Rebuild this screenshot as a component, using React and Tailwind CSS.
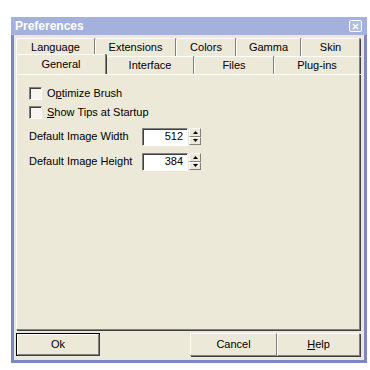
import React from "react";

const font = { fontFamily: '"Liberation Sans", Arial, sans-serif' };

function Tab({ w, children, selected }) {
  return (
    <div
      className={
        "flex items-center justify-center border-l border-t border-white border-r border-r-[#808080] shadow-[1px_0_0_#404040] rounded-t-[2px] " +
        (selected ? "h-[20px] -mt-[2px] bg-[#ece9d8] relative z-10" : "h-[18px]")
      }
      style={{ width: w }}
    >
      {children}
    </div>
  );
}

function Check({ children }) {
  return (
    <div className="flex items-center gap-[5px] h-[19px]">
      <div className="w-[13px] h-[13px] bg-[#f6f4ee] border-t border-l border-[#808080] border-b border-r border-b-white border-r-white shadow-[inset_1px_1px_0_#404040]" />
      <span>{children}</span>
    </div>
  );
}

function Spin({ label, value }) {
  return (
    <div className="flex items-center h-[25px]">
      <span className="w-[113px]">{label}</span>
      <div className="w-[46px] h-[18px] bg-white border-t border-l border-[#808080] border-b border-r border-b-white border-r-white shadow-[inset_1px_1px_0_#404040] flex items-center justify-end pr-[4px]">
        {value}
      </div>
      <div className="ml-[1px] w-[12px] h-[17px] flex flex-col">
        <div className="flex-1 flex items-center justify-center border-t border-l border-white border-r border-b border-r-[#808080] border-b-[#808080]">
          <svg width="5" height="3"><path d="M2.5 0 L5 3 L0 3 Z" fill="#000" /></svg>
        </div>
        <div className="flex-1 flex items-center justify-center border-t border-l border-white border-r border-b border-r-[#808080] border-b-[#808080]">
          <svg width="5" height="3"><path d="M0 0 L5 0 L2.5 3 Z" fill="#000" /></svg>
        </div>
      </div>
    </div>
  );
}

function Btn({ w, children, def, className = "" }) {
  return (
    <div
      className={
        "h-[23px] flex items-center justify-center bg-[#ece9d8] " +
        (def ? "border border-black " : "") +
        className
      }
      style={{ width: w }}
    >
      <div className="w-full h-full flex items-center justify-center border-t border-l border-white border-r border-b border-r-[#808080] border-b-[#808080] shadow-[1px_1px_0_#404040]">
        {children}
      </div>
    </div>
  );
}

export default function App() {
  return (
    <div className="w-[370px] h-[370px] bg-white pt-[17px] pl-[11px] text-[11px] text-black" style={font}>
      <div className="w-[356px] h-[346px] flex flex-col bg-[#ece9d8] border-x-[3px] border-b-[3px] border-[#7c87c4]">
        <div className="h-[18px] -mx-[3px] px-[3px] bg-[#a4b1dc] flex items-center justify-between">
          <span className="text-[12px] font-bold text-white pl-[1px] leading-none">Preferences</span>
          <div className="mr-[2px] w-[13px] h-[12px] bg-[#b3bce3] border border-white rounded-[2px] flex items-center justify-center">
            <svg width="7" height="7" viewBox="0 0 7 7">
              <path d="M1 1 L6 6 M6 1 L1 6" stroke="#fff" strokeWidth="1.6" />
            </svg>
          </div>
        </div>
        <div className="ml-[2px] w-[344px] mt-[3px] flex flex-col">
          <div className="flex">
            <Tab w={79}>Language</Tab>
            <Tab w={81}>Extensions</Tab>
            <Tab w={60}>Colors</Tab>
            <Tab w={65}>Gamma</Tab>
            <Tab w={59}>Skin</Tab>
          </div>
          <div className="flex">
            <Tab w={90} selected>General</Tab>
            <Tab w={88}>Interface</Tab>
            <Tab w={80}>Files</Tab>
            <Tab w={86}>Plug-ins</Tab>
          </div>
          <div className="h-[256px] border-t border-l border-white border-r border-b border-r-[#808080] border-b-[#808080] shadow-[1px_1px_0_#404040] pl-[12px] pt-[9px] flex flex-col">
            <Check>
              O<span className="underline">p</span>timize Brush
            </Check>
            <Check>
              <span className="underline">S</span>how Tips at Startup
            </Check>
            <div className="h-[2px]" />
            <Spin label="Default Image Width" value="512" />
            <Spin label="Default Image Height" value="384" />
          </div>
        </div>
        <div className="ml-[2px] mt-[3px] flex">
          <Btn w={84} def>
            Ok
          </Btn>
          <Btn w={87} className="ml-[90px]">
            Cancel
          </Btn>
          <Btn w={83}>
            <span className="underline">H</span>elp
          </Btn>
        </div>
      </div>
    </div>
  );
}
